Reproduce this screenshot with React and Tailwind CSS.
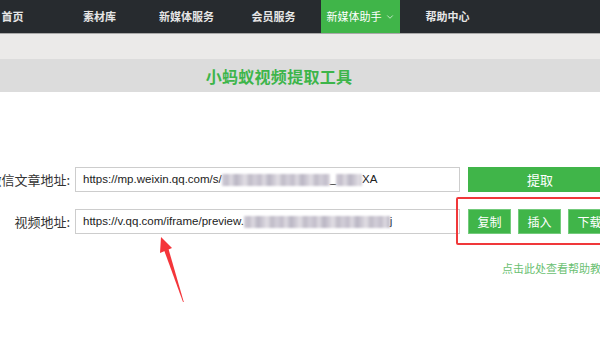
import React from 'react';
import { ChevronDown } from 'lucide-react';

const cjk = "font-['Noto_Sans_CJK_SC','Noto_Sans',sans-serif]";
const latin = "font-['Liberation_Sans','Noto_Sans_CJK_SC',sans-serif]";

const navItems = ['首页', '素材库', '新媒体服务', '会员服务', '新媒体助手', '帮助中心'];

// blurred part of the url, like the mosaic in the screenshot
const Blur = ({ w }) => (
  <span
    className="inline-block h-[12px] align-middle blur-[1px] bg-[repeating-linear-gradient(90deg,#d3cfd9_0px,#c2bdca_5px,#dedbe2_9px,#b9b5c3_14px,#cfcbd5_19px,#e2dfe5_23px,#bfbbc7_28px,#d3cfd9_33px)]"
    style={{ width: w }}
  />
);

const App = () => {
  return (
    <div className={`relative w-[600px] h-[340px] overflow-hidden bg-white ${cjk}`}>
      {/* top nav */}
      <div className="h-[34px] bg-[#272b2f] border-b border-[#a9a9a9] flex">
        <div className="flex gap-[8px] -ml-[27px] h-[33px]">
          {navItems.map((item) =>
            item === '新媒体助手' ? (
              <div key={item} className="w-[79px] shrink-0 h-full bg-[#40b549] flex items-center justify-center gap-[3px] text-[11px] text-white">
                <span>{item}</span>
                <ChevronDown size={10} strokeWidth={2} className="text-[#d9f0db]" />
              </div>
            ) : (
              <div key={item} className="w-[79px] shrink-0 h-full flex items-center justify-center text-[11px] font-bold text-[#e6e6e6]">
                {item}
              </div>
            )
          )}
        </div>
      </div>

      {/* title band */}
      <div className="h-[25px] bg-[#ebeae9]" />
      <div className="h-[33px] bg-[#dcdcdc] flex items-center justify-center pr-[42px]">
        <span className="text-[16px] font-bold text-[#3db54a] tracking-[0.3px]">小蚂蚁视频提取工具</span>
      </div>

      {/* form */}
      <div className="mt-[75px] flex flex-col gap-[17px]">
        <div className="flex items-center h-[25px]">
          <div className="w-[70px] shrink-0 flex justify-end whitespace-nowrap text-[13px] text-[#333]">微信文章地址:</div>
          <div className={`ml-[5px] w-[385px] shrink-0 h-[25px] border border-[#cdcdcd] pl-[7px] flex items-center whitespace-nowrap overflow-hidden text-[11.5px] text-[#222] ${latin}`}>
            <span>https://mp.weixin.qq.com/s/</span>
            <Blur w={108} />
            <span>_</span>
            <Blur w={26} />
            <span>XA</span>
          </div>
          <button className="ml-[8px] w-[144px] h-[25px] shrink-0 bg-[#40b549] text-white text-[13px]">提取</button>
        </div>

        <div className="flex items-center h-[25px]">
          <div className="w-[70px] shrink-0 flex justify-end whitespace-nowrap text-[13px] text-[#333]">视频地址:</div>
          <div className={`ml-[5px] w-[385px] shrink-0 h-[25px] border border-[#cdcdcd] pl-[7px] flex items-center whitespace-nowrap overflow-hidden text-[11.5px] text-[#222] ${latin}`}>
            <span>https://v.qq.com/iframe/preview.</span>
            <Blur w={146} />
            <span>j</span>
          </div>
          <div className="ml-[8px] flex gap-[7px] shrink-0">
            <button className="w-[43px] h-[25px] shrink-0 bg-[#40b549] border border-[#74cb7c] text-white text-[12px]">复制</button>
            <button className="w-[43px] h-[25px] shrink-0 bg-[#40b549] border border-[#74cb7c] text-white text-[12px]">插入</button>
            <button className="w-[43px] h-[25px] shrink-0 bg-[#40b549] border border-[#74cb7c] text-white text-[12px]">下载</button>
          </div>
        </div>
      </div>

      <div className="mt-[26px] pl-[502px] whitespace-nowrap text-[11px] text-[#6bbf72]">点击此处查看帮助教程</div>

      {/* red annotation box */}
      <div className="absolute left-[456px] top-[197px] w-[170px] h-[48px] border-2 border-[#f0383a] rounded-[2px]" />

      {/* red arrow */}
      <svg className="absolute left-[150px] top-[230px]" width="45" height="80" viewBox="0 0 45 80">
        <polygon points="11,7 22,18 10,23" fill="#f4353a" />
        <polygon points="14,20 18.5,19 33.8,72 33,72" fill="#f4353a" />
      </svg>
    </div>
  );
};

export default App;
